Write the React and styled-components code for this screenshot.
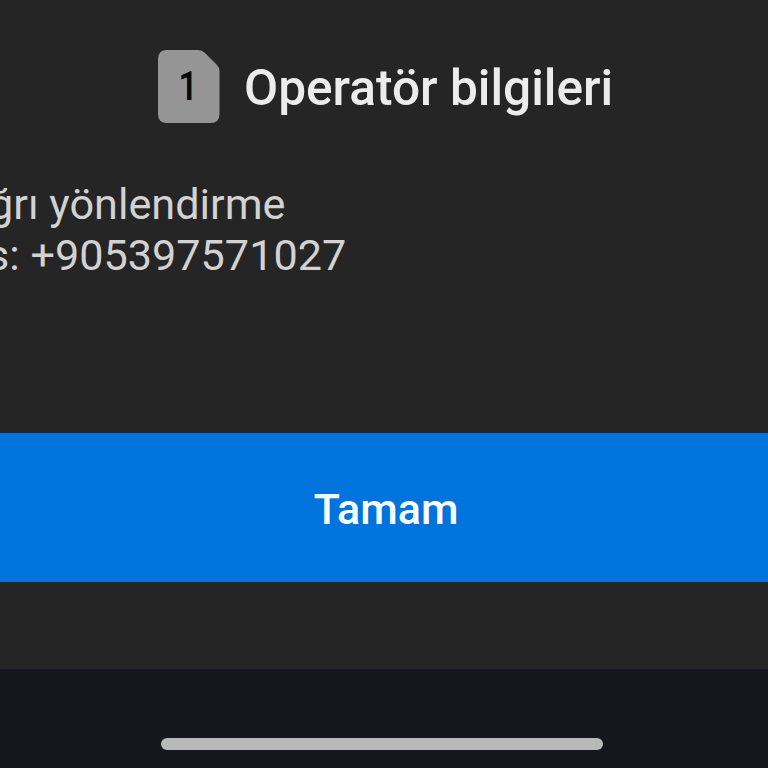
import styled, { createGlobalStyle } from 'styled-components';

const GlobalStyle = createGlobalStyle`
* {
box-sizing: border-box;
}

body {
margin: 0;
background-color: #252525;
font-family: Roboto, "Noto Sans", sans-serif;
}
`;

const App = () => {
    return (
        <Screen>
            <GlobalStyle />
            <Dialog role="dialog">
                <Header>
                    <SimCard>
                        <SimShape viewBox="0 0 62 74">
                            <path d="M9 0H40Q44 0 47 3L58.5 14.5Q61.5 17.5 61.5 21V64Q61.5 73 52.5 73H9Q0 73 0 64V9Q0 0 9 0Z" fill="#959595" />
                        </SimShape>
                        <SimNumber>1</SimNumber>
                    </SimCard>
                    <Title>Operatör bilgileri</Title>
                </Header>
                <Message>
                    <Line $shift={-11}>ğrı yönlendirme</Line>
                    <Line $shift={-13}>s: +905397571027</Line>
                </Message>
                <ConfirmButton type="button">Tamam</ConfirmButton>
            </Dialog>
            <NavigationBar>
                <GestureHandle />
            </NavigationBar>
        </Screen>
    );
};

export default App;

const Screen = styled.div`
display: flex;
flex-direction: column;
width: 768px;
height: 768px;
overflow: hidden;
`;

const Dialog = styled.div`
display: flex;
flex-direction: column;
height: 669px;
background-color: #252525;
`;

const Header = styled.header`
display: flex;
align-items: flex-start;
gap: 24px;
height: 179px;
padding: 50px 0 0 158px;
`;

const SimCard = styled.div`
display: grid;
width: 62px;
height: 74px;
`;

const SimShape = styled.svg`
grid-area: 1 / 1;
width: 62px;
height: 74px;
`;

const SimNumber = styled.span`
grid-area: 1 / 1;
padding: 15px 2px 0 0;
color: #080808;
font-size: 40px;
font-weight: 600;
line-height: 44px;
text-align: center;
transform: scaleX(0.84);
`;

const Title = styled.h1`
margin: 0;
padding-top: 9px;
color: #ececec;
font-size: 49.6px;
font-weight: 500;
line-height: 58px;
white-space: nowrap;
`;

const Message = styled.div`
height: 254px;
color: #d2d2d2;
font-size: 43.2px;
line-height: 51px;
`;

const Line = styled.p`
margin: 0 0 0 ${(props) => props.$shift}px;
white-space: nowrap;
`;

const ConfirmButton = styled.button`
width: 100%;
height: 149px;
padding: 2px 0 0 4px;
border: 0;
background-color: #0073dd;
color: #f8ffff;
font-family: inherit;
font-size: 43px;
font-weight: 500;
`;

const NavigationBar = styled.footer`
display: flex;
justify-content: center;
height: 99px;
padding: 69px 4px 0 0;
background-color: #16171c;
`;

const GestureHandle = styled.div`
width: 442px;
height: 12px;
border-radius: 6px;
background-color: #b9b9bb;
`;
